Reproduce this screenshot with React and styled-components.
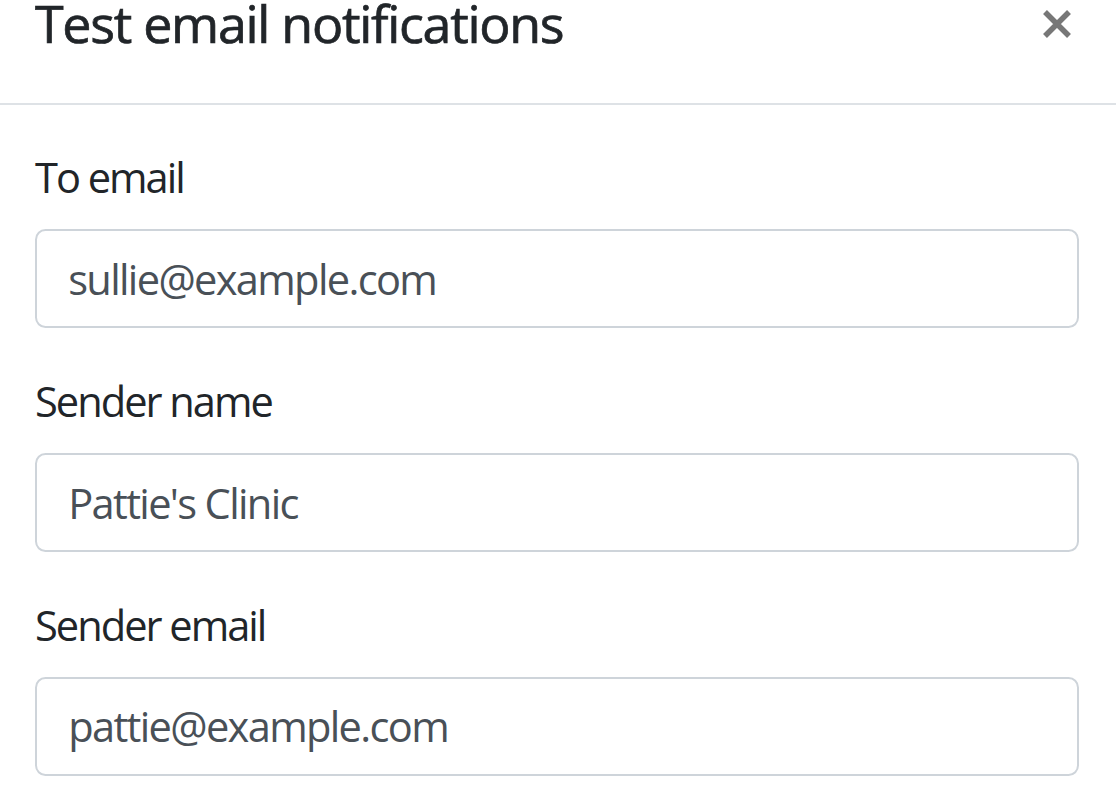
import React from "react";
import styled, { createGlobalStyle } from "styled-components";

const GlobalStyle = createGlobalStyle`
  html, body {
    margin: 0;
    padding: 0;
    background: #fff;
  }
  body {
    font-family: "Open Sans", "Noto Sans", "Liberation Sans", sans-serif;
    color: #212529;
    overflow: hidden;
  }
  * {
    box-sizing: border-box;
  }
`;

const Modal = styled.div`
  width: 1116px;
  background: #fff;
`;

const Header = styled.div`
  height: 105px;
  display: flex;
  align-items: flex-start;
  justify-content: space-between;
  padding: 0 44px 0 35px;
  border-bottom: 2px solid #dee2e6;
`;

const Title = styled.h5`
  margin: 0;
  font-size: 52px;
  font-weight: 400;
  line-height: 46px;
  letter-spacing: -0.025em;
  -webkit-text-stroke: 0.7px #212529;
  color: #212529;
`;

const CloseButton = styled.button`
  border: 0;
  background: transparent;
  padding: 0;
  margin-top: 10px;
  width: 30px;
  height: 28px;
  cursor: pointer;
  display: flex;
  align-items: center;
  justify-content: center;
  svg {
    display: block;
  }
`;

const Body = styled.form`
  padding: 41px 37px 0 35px;
`;

const Group = styled.div`
  margin-bottom: 41.6px;
`;

const Label = styled.label`
  display: block;
  font-size: 41.6px;
  line-height: 62.4px;
  letter-spacing: -0.048em;
  margin-bottom: 20.8px;
  color: #212529;
`;

const Input = styled.input`
  display: block;
  width: 100%;
  height: 99px;
  padding: 15.6px 31.2px;
  font-family: inherit;
  font-size: 41.6px;
  line-height: 62.4px;
  letter-spacing: -0.04em;
  color: #495057;
  background: #fff;
  border: 2.5px solid #ced4da;
  border-radius: 10.4px;
  outline: none;
`;

const fields = [
  { id: "to", label: "To email", value: "sullie@example.com" },
  { id: "name", label: "Sender name", value: "Pattie's Clinic" },
  { id: "from", label: "Sender email", value: "pattie@example.com" },
];

export default function App() {
  return (
    <>
      <GlobalStyle />
      <Modal>
        <Header>
          <Title>Test email notifications</Title>
          <CloseButton type="button" aria-label="Close">
            <svg width="30" height="28" viewBox="0 0 30 28">
              <path
                d="M3 2 L27 26 M27 2 L3 26"
                stroke="#777"
                strokeWidth="5.5"
                strokeLinecap="butt"
              />
            </svg>
          </CloseButton>
        </Header>
        <Body>
          {fields.map((f) => (
            <Group key={f.id}>
              <Label htmlFor={f.id}>{f.label}</Label>
              <Input id={f.id} type="text" defaultValue={f.value} />
            </Group>
          ))}
        </Body>
      </Modal>
    </>
  );
}
